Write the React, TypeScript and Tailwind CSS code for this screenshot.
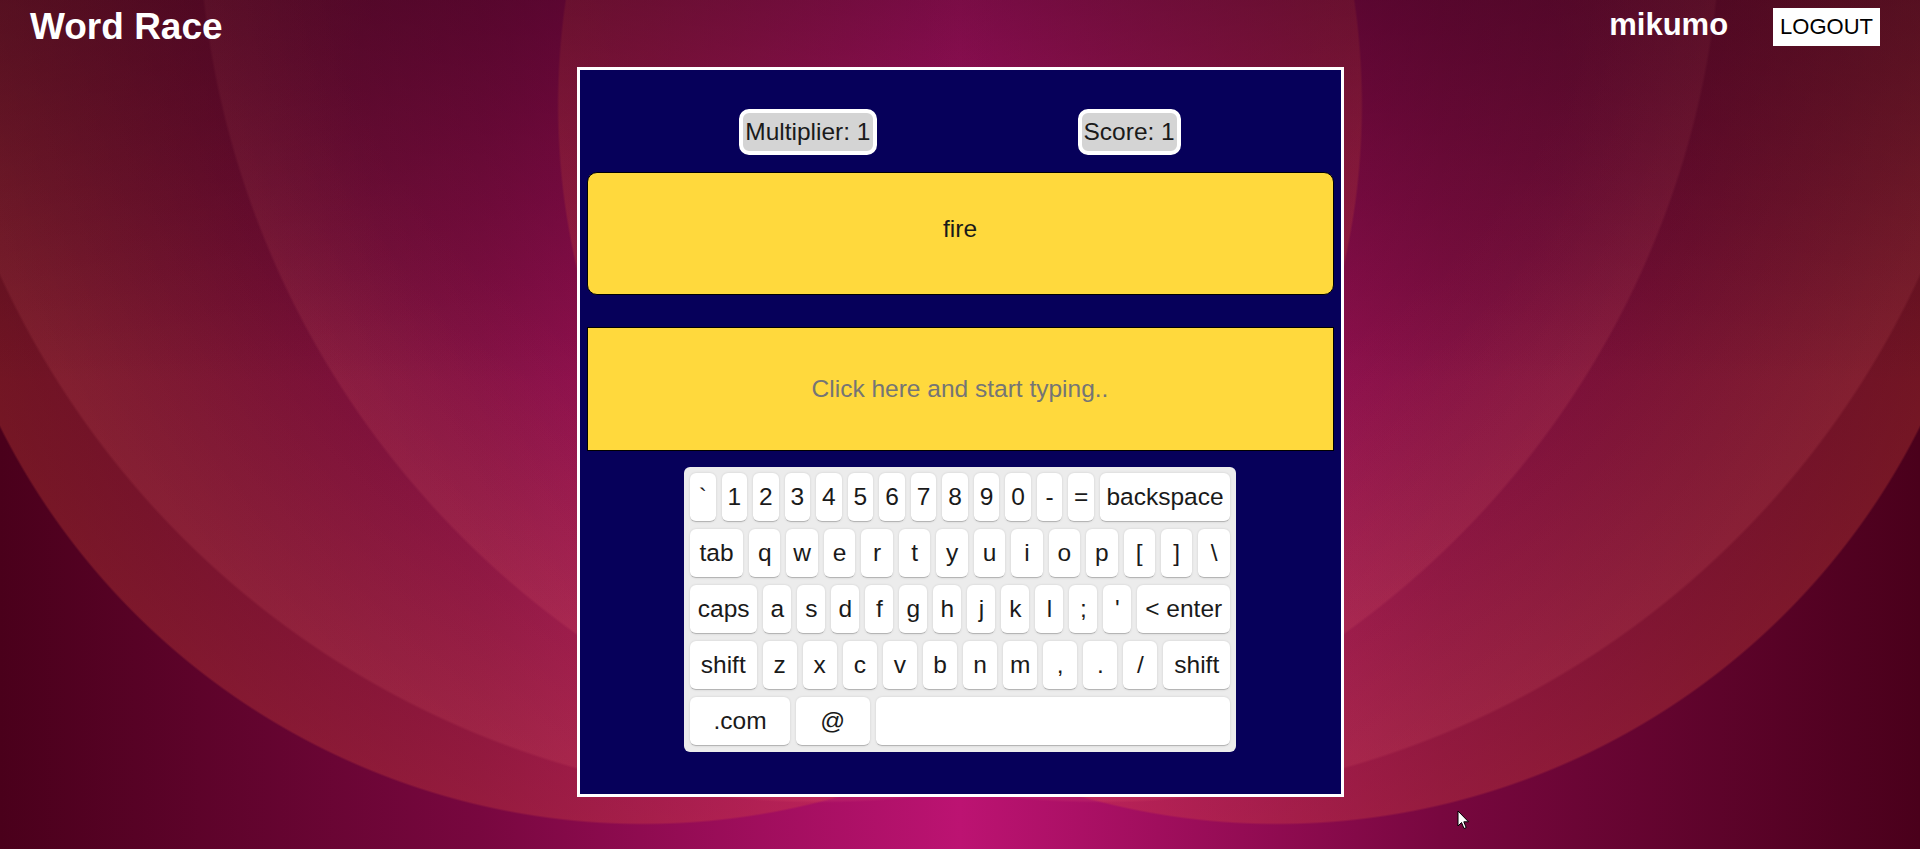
import React from "react";

type KeyDef = { label: string; kind: "std" | "fn" | "com" | "at" };

const std = (s: string): KeyDef[] => s.split(" ").map((c) => ({ label: c, kind: "std" as const }));

const rows: KeyDef[][] = [
  [...std("` 1 2 3 4 5 6 7 8 9 0 - ="), { label: "backspace", kind: "fn" }],
  [{ label: "tab", kind: "fn" }, ...std("q w e r t y u i o p [ ] \\")],
  [{ label: "caps", kind: "fn" }, ...std("a s d f g h j k l ; '"), { label: "< enter", kind: "fn" }],
  [{ label: "shift", kind: "fn" }, ...std("z x c v b n m , . /"), { label: "shift", kind: "fn" }],
  [
    { label: ".com", kind: "com" },
    { label: "@", kind: "at" },
    { label: "\u00a0", kind: "fn" },
  ],
];

function Key({ k }: { k: KeyDef }) {
  const base =
    "flex h-[49px] grow items-center justify-center rounded-[6px] border-b border-[#b5b5b5] bg-white px-[6px] shadow-[0_0_3px_-1px_rgba(0,0,0,0.3)] whitespace-nowrap";
  let extra = "";
  if (k.kind === "std") extra = "w-[24.5px]";
  if (k.kind === "com") extra = "w-[24.5px] max-w-[100px]";
  if (k.kind === "at") extra = "w-[24.5px] max-w-[73.5px]";
  return <div className={`${base} ${extra}`}>{k.label}</div>;
}

export default function App() {
  return (
    <div
      className="relative min-h-[849px] w-full overflow-hidden font-['Liberation_Sans',Arial,sans-serif] text-[#1a1a1a] bg-[linear-gradient(to_bottom,rgba(40,0,20,0.45),rgba(40,0,20,0)_45%),radial-gradient(circle_903px_at_1100px_-100px,rgba(255,120,120,0)_55%,rgba(255,120,120,0.12)_99.7%,transparent_100%),radial-gradient(circle_903px_at_820px_-100px,rgba(255,120,120,0)_55%,rgba(255,120,120,0.12)_99.7%,transparent_100%),radial-gradient(circle_720px_at_643px_105px,rgba(225,80,60,0)_40%,rgba(225,80,60,0.28)_99.7%,transparent_100%),radial-gradient(circle_720px_at_1277px_105px,rgba(225,80,60,0)_40%,rgba(225,80,60,0.28)_99.7%,transparent_100%),linear-gradient(to_right,#4a001b,#78073f_25%,#bc1372_50%,#78073f_75%,#4a001b)]"
    >
      {/* header */}
      <header className="flex h-[67px] items-start justify-between pl-[30px] pr-[40px]">
        <h1 className="pt-[6px] text-[37px] font-bold leading-[42px] text-white">Word Race</h1>
        <div className="flex items-start gap-[45px]">
          <span className="pt-[7px] text-[31px] font-bold leading-[36px] text-white">mikumo</span>
          <button className="mt-[8px] h-[38px] bg-white px-[7px] text-[22px] leading-[38px] text-black">
            LOGOUT
          </button>
        </div>
      </header>

      {/* game panel */}
      <main className="mx-auto flex h-[730px] w-[767px] flex-col border-[3px] border-white bg-[#06005a] pt-[39px]">
        <div className="flex justify-center gap-[201px] text-[24.5px] leading-[28px]">
          <div className="rounded-[10px] border-4 border-white bg-[#d4d4d4] px-[2px] py-[5px]">Multiplier: 1</div>
          <div className="rounded-[10px] border-4 border-white bg-[#d4d4d4] px-[2px] py-[5px]">Score: 1</div>
        </div>

        <div className="mx-[7px] mt-[17px] flex h-[123px] items-center justify-center rounded-[10px] border border-black bg-[#ffd93d] pb-[9px] text-[24.5px]">
          fire
        </div>

        <div className="mx-[7px] mt-[32px] flex h-[124px] items-center justify-center border border-black bg-[#ffd93d] text-[24.5px] text-[#757575]">
          Click here and start typing..
        </div>

        <div className="mx-auto mt-[16px] flex w-[552px] flex-col gap-[7px] rounded-[6px] bg-[#ececec] p-[6px] text-[24.5px] text-[#1a1a1a]">
          {rows.map((row, i) => (
            <div key={i} className="flex gap-[6px]">
              {row.map((k, j) => (
                <Key key={j} k={k} />
              ))}
            </div>
          ))}
        </div>
      </main>

      {/* mouse cursor */}
      <svg className="absolute left-[1457px] top-[810px]" width="13" height="20" viewBox="0 0 13 20">
        <path d="M1 1 L1 16 L4.5 12.5 L7 18.5 L9.2 17.6 L6.8 11.8 L11.5 11.8 Z" fill="white" stroke="black" strokeWidth="1" />
      </svg>
    </div>
  );
}
